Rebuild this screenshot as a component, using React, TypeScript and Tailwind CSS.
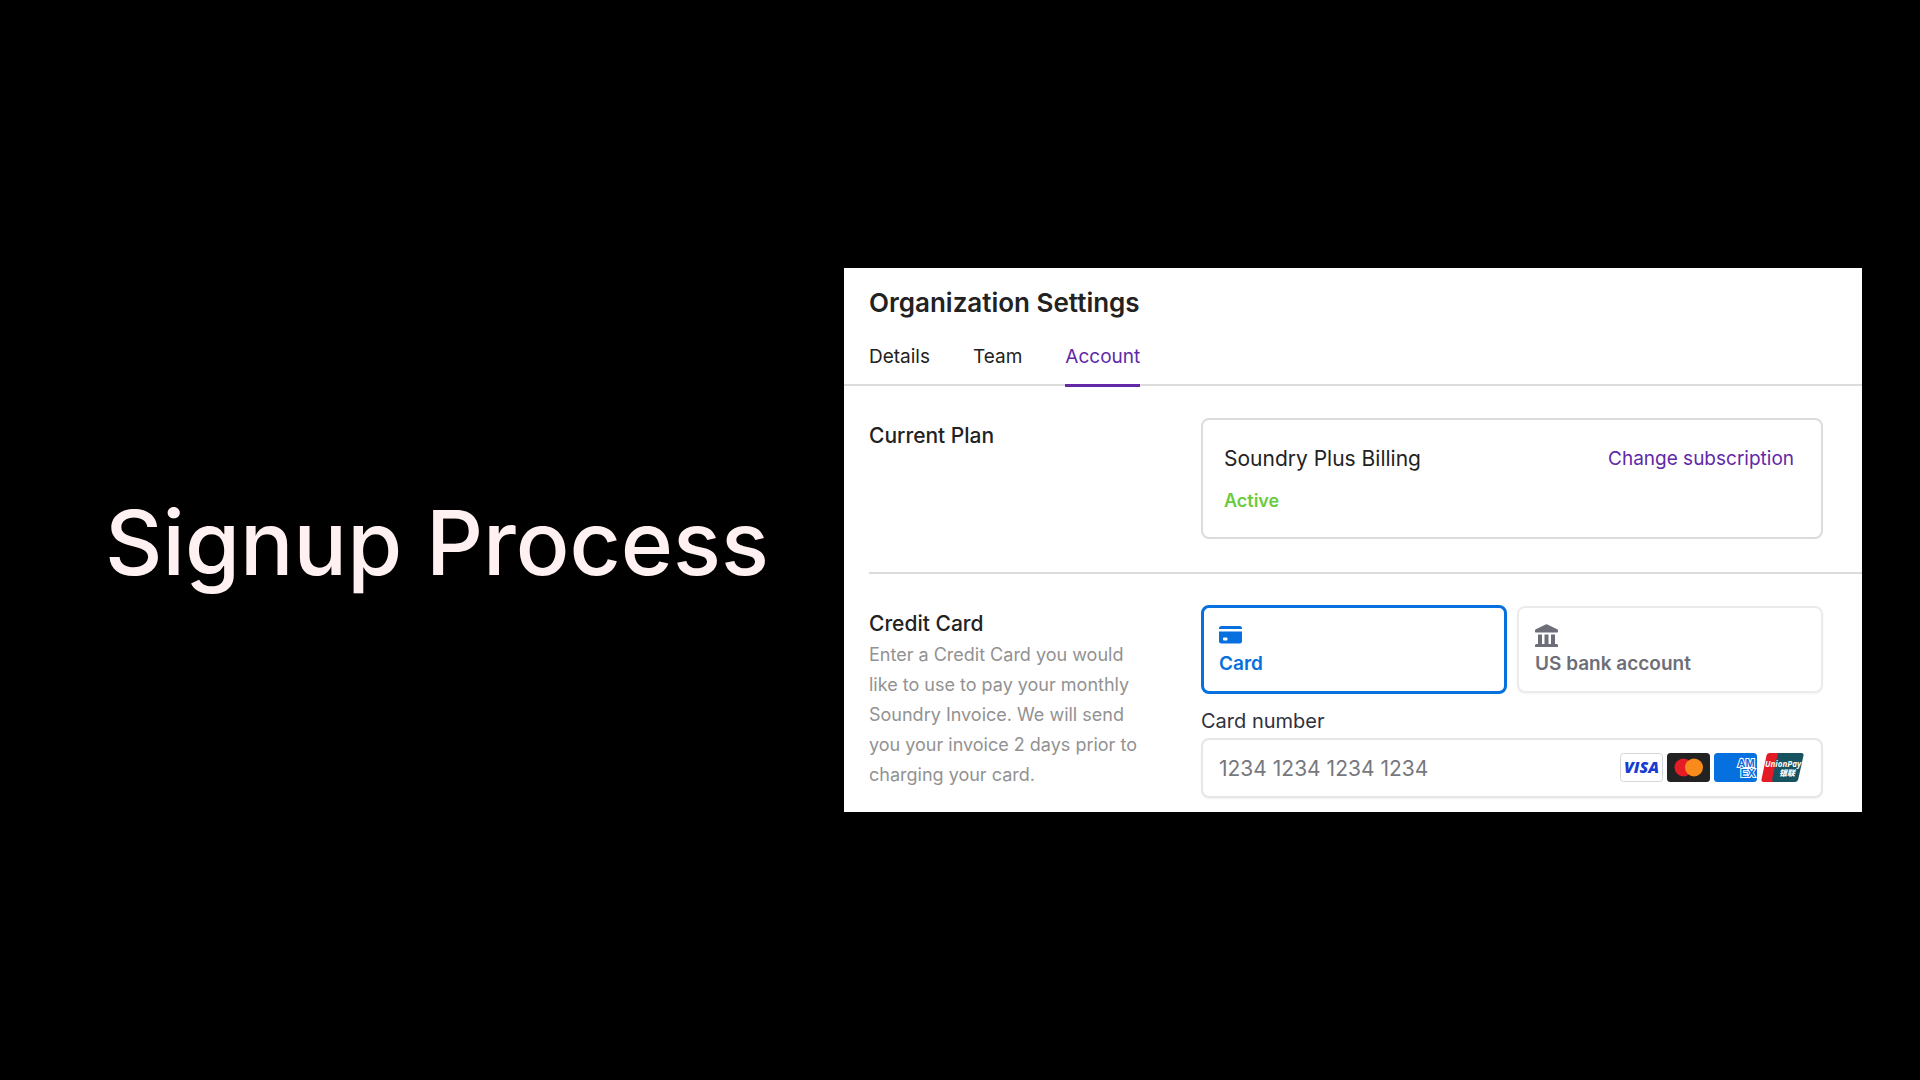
import { useState, type ReactNode } from "react";

const tabs = ["Details", "Team", "Account"];

function CardIcon() {
  return (
    <svg viewBox="0 0 23 18" className="w-[23px] h-[18px]" fill="currentColor" aria-hidden="true">
      <path d="M0 3V2.500A2.500 2.500 0 0 1 2.500 0h18A2.500 2.500 0 0 1 23 2.500V3z" />
      <path
        fillRule="evenodd"
        d="M0 5.500h23V15a2.500 2.500 0 0 1-2.500 2.500h-18A2.500 2.500 0 0 1 0 15zM5 11.500a1 1 0 0 0-1 1v1a1 1 0 0 0 1 1h2.500a1 1 0 0 0 1-1v-1a1 1 0 0 0-1-1z"
      />
    </svg>
  );
}

function BankIcon() {
  return (
    <svg viewBox="0 0 23 23" className="w-[23px] h-[23px]" fill="currentColor" aria-hidden="true">
      <path d="M10.600.4a2 2 0 0 1 1.800 0l9.800 4.800c.5.3.8.7.8 1.200v1.100c0 .6-.4 1-1 1H1c-.6 0-1-.4-1-1V6.400c0-.5.3-.9.8-1.200z" />
      <path d="M3 10.500h4V20H3zM9.500 10.500h4V20h-4zM16 10.500h4V20h-4z" />
      <path d="M1.500 20h20c.8 0 1.500.7 1.500 1.500V23H0v-1.500c0-.8.7-1.500 1.500-1.500z" />
    </svg>
  );
}

function Visa() {
  return (
    <svg viewBox="0 0 43 29" className="w-[43px] h-[29px]" role="img" aria-label="Visa">
      <rect x="0.500" y="0.500" width="42" height="28" rx="3" fill="#fff" stroke="#d6d6da" />
      <text x="21.500" y="20" textAnchor="middle" fontFamily="Open Sans, sans-serif" fontWeight="800" fontStyle="italic" fontSize="16" fill="#1a3bd0">
        VISA
      </text>
    </svg>
  );
}

function Mastercard() {
  return (
    <svg viewBox="0 0 43 29" className="w-[43px] h-[29px]" role="img" aria-label="Mastercard">
      <rect width="43" height="29" rx="3.500" fill="#222" />
      <circle cx="16.500" cy="14.500" r="9" fill="#e61c24" />
      <circle cx="27" cy="14.500" r="9" fill="#f98b1c" />
    </svg>
  );
}

function Amex() {
  return (
    <svg viewBox="0 0 43 29" className="w-[43px] h-[29px]" role="img" aria-label="American Express">
      <rect width="43" height="29" rx="3.500" fill="#0570de" />
      <g fontFamily="Liberation Sans, sans-serif" fontWeight="700" fontSize="11" fill="#0570de" stroke="#fff" strokeWidth="2" paintOrder="stroke">
        <text x="23.500" y="13.500">AM</text>
        <text x="26.500" y="23.500">EX</text>
      </g>
    </svg>
  );
}

function UnionPay() {
  return (
    <svg viewBox="0 0 43 29" className="w-[43px] h-[29px]" role="img" aria-label="UnionPay">
      <path d="M9 0h31.500a2 2 0 0 1 2 2.500L37.200 26.500A3.200 3.200 0 0 1 34 29H10z" fill="#16525f" />
      <path d="M8.500 0H17l-5.500 24.500c-.6 2.500 0 4.500 1 4.500H2.500A2 2 0 0 1 .5 26.500L5.500 2.500A3.200 3.200 0 0 1 8.500 0z" fill="#e21b25" />
      <text x="4" y="14" fontFamily="Open Sans, sans-serif" fontWeight="700" fontStyle="italic" fontSize="8" fill="#fff">
        UnionPay
      </text>
      <text x="18" y="23" fontFamily="Noto Sans CJK SC, sans-serif" fontWeight="900" fontStyle="italic" fontSize="8" fill="#fff">
        银联
      </text>
    </svg>
  );
}

interface MethodProps {
  label: string;
  icon: ReactNode;
  selected: boolean;
  onSelect: () => void;
}

function PaymentMethod({ label, icon, selected, onSelect }: MethodProps) {
  return (
    <button
      type="button"
      aria-pressed={selected}
      onClick={onSelect}
      className={`flex-1 rounded-lg text-left text-[19px] leading-7 font-semibold pt-0.5 ${
        selected
          ? "h-[89px] border-3 border-[#0570de] text-[#0570de] px-[15px]"
          : "h-[87px] border-2 border-[#ebebeb] text-[#6d6e78] px-4 shadow-xs"
      }`}
    >
      <span className="flex h-6 items-center">{icon}</span>
      <span className="block mt-[3px]">{label}</span>
    </button>
  );
}

function SettingsPanel() {
  const [active, setActive] = useState("Account");
  const [method, setMethod] = useState("card");

  return (
    <main className="bg-white text-[#222] pb-[14px]">
      <header className="pt-[19px] px-[25px] border-b-2 border-[#dcdcdc]">
        <h2 className="text-[26px] leading-8 font-semibold">Organization Settings</h2>
        <nav className="flex gap-[43px] mt-6">
          {tabs.map((tab) => (
            <button
              key={tab}
              type="button"
              onClick={() => setActive(tab)}
              className={`text-[19px] leading-7 pb-[13px] -mb-[3px] border-b-3 ${
                tab === active ? "text-[#6129a8] border-[#6129a8]" : "border-transparent"
              }`}
            >
              {tab}
            </button>
          ))}
        </nav>
      </header>

      <section className="ml-[25px] pr-[39px] pt-8 pb-[33px] flex border-b-2 border-[#dcdcdc]">
        <h3 className="w-[332px] shrink-0 pt-1 text-[21px] leading-7 font-medium">Current Plan</h3>
        <div className="flex-1 h-[121px] border-2 border-[#dcdcdc] rounded-lg pt-[25px] pl-[21px] pr-[27px]">
          <div className="flex items-center justify-between">
            <span className="text-[21px] leading-7">Soundry Plus Billing</span>
            <a href="#subscription" className="text-[19px] leading-7 text-[#6129a8]">
              Change subscription
            </a>
          </div>
          <p className="mt-[14px] text-[18px] leading-7 font-semibold text-[#6bcb3d]">Active</p>
        </div>
      </section>

      <section className="ml-[25px] pr-[39px] pt-[31px] flex">
        <div className="w-[332px] shrink-0 pt-[5px] pr-14">
          <h3 className="text-[21px] leading-7 font-medium">Credit Card</h3>
          <p className="mt-0.5 text-[18px] leading-[30px] text-[#929292]">
            Enter a Credit Card you would like to use to pay your monthly Soundry Invoice. We will send you your invoice 2 days
            prior to charging your card.
          </p>
        </div>
        <div className="flex-1">
          <div className="flex items-center gap-[10px]">
            <PaymentMethod label="Card" icon={<CardIcon />} selected={method === "card"} onSelect={() => setMethod("card")} />
            <PaymentMethod
              label="US bank account"
              icon={<BankIcon />}
              selected={method === "bank"}
              onSelect={() => setMethod("bank")}
            />
          </div>
          <label htmlFor="card-number" className="block mt-[13px] text-[20px] leading-7 text-[#30313d]">
            Card number
          </label>
          <div className="mt-[3px] h-[60px] flex items-center border-2 border-[#e6e6e6] rounded-lg shadow-xs pl-4 pr-[17px]">
            <input
              id="card-number"
              inputMode="numeric"
              placeholder="1234 1234 1234 1234"
              className="flex-1 min-w-0 pt-0.5 text-[21px] leading-7 outline-none placeholder:text-[#77787e]"
            />
            <div className="flex gap-1 pb-0.5">
              <Visa />
              <Mastercard />
              <Amex />
              <UnionPay />
            </div>
          </div>
        </div>
      </section>
    </main>
  );
}

export default function App() {
  return (
    <div className="min-h-screen bg-black grid grid-cols-[844fr_1018fr] items-center pr-[58px] font-['Inter',sans-serif]">
      <h1 className="pl-[105px] pt-1 text-[89px] leading-none font-medium text-[#fff1f1] whitespace-nowrap">Signup Process</h1>
      <SettingsPanel />
    </div>
  );
}
